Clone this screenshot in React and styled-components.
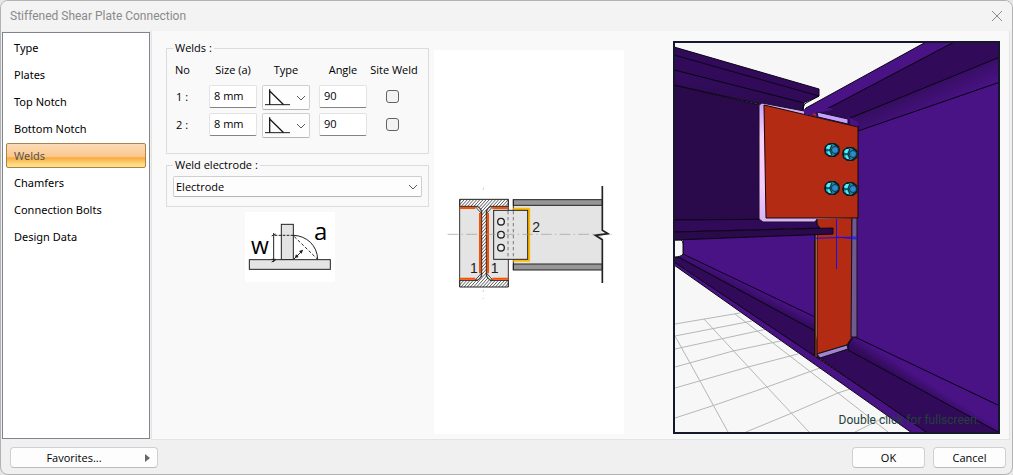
import React, { useState } from "react";
import styled, { createGlobalStyle } from "styled-components";

const pages = [
  "Type",
  "Plates",
  "Top Notch",
  "Bottom Notch",
  "Welds",
  "Chamfers",
  "Connection Bolts",
  "Design Data",
];

const welds = [
  { no: 1, size: "8 mm", angle: "90" },
  { no: 2, size: "8 mm", angle: "90" },
];

const Chevron = () => (
  <ChevronIcon viewBox="0 0 10 6" aria-hidden="true">
    <path d="M1 1l4 4 4-4" fill="none" stroke="#5c5c5c" />
  </ChevronIcon>
);

const FilletIcon = () => (
  <TypeIcon viewBox="0 0 75 51" aria-hidden="true">
    <g stroke="#1c1c1c" strokeWidth="4" fill="none">
      <path d="M14 1V48M14 6L56 47" />
      <path d="M0 47H75" strokeWidth="3" />
    </g>
  </TypeIcon>
);

const WeldSketch = () => (
  <Sketch viewBox="15 21 270 210" role="img" aria-label="Weld size">
    <g fill="#e4e4e4" stroke="#222" strokeWidth="3">
      <rect x="124" y="58" width="36" height="106" />
      <rect x="28" y="164" width="243" height="29" />
    </g>
    <g fill="none" stroke="#222" strokeWidth="3">
      <path d="M101 84V171M95 93l12-6M95 171l12-6M95 163h12" />
      <path d="M104 91H160" strokeDasharray="8 4" />
      <path d="M160 91C200 92 232 122 233 163" />
      <path d="M163 95L232 162" strokeDasharray="9 6" />
      <path d="M162 162L188 136" />
    </g>
    <path d="M189 134l-4 12-8-8zM164 160l4-12 8 8z" fill="#222" />
    <SketchText x="33" y="146" $size={69}>
      w
    </SketchText>
    <SketchText x="222" y="104" $size={72}>
      a
    </SketchText>
  </Sketch>
);

const ConnectionDiagram = () => (
  <Diagram viewBox="-21 0 516 375" role="img" aria-label="Weld positions">
    <defs>
      <pattern
        id="hatch"
        width="7"
        height="7"
        patternUnits="userSpaceOnUse"
        patternTransform="rotate(42)"
      >
        <rect width="7" height="7" fill="#fff" />
        <path d="M1 0V7" stroke="#333" strokeWidth="2" />
      </pattern>
    </defs>
    <rect x="29" y="78" width="146" height="222" fill="#e4e4e4" />
    <rect x="190" y="76" width="267" height="178" fill="#e4e4e4" />
    <g fill="#969696" stroke="#222" strokeWidth="3">
      <rect x="190" y="59" width="267" height="17" />
      <rect x="190" y="252" width="267" height="18" />
    </g>
    <path d="M190 58V270" stroke="#222" strokeWidth="3" />
    <path
      d="M29 58H175V79H120L109 91V289L120 301H175V321H29V301H84L95 289V91L84 79H29Z"
      fill="url(#hatch)"
      stroke="#222"
      strokeWidth="3"
    />
    <path d="M29 58V321M175 58V321" stroke="#333" strokeWidth="3" />
    <g fill="#f4f4f4" stroke="#222" strokeWidth="2.5">
      <path d="M76 80Q92 78 95 101ZM128 80Q112 78 109 101Z" />
      <path d="M76 300Q92 302 95 279ZM128 300Q112 302 109 279Z" />
    </g>
    <g stroke="#ff4d00" strokeWidth="6">
      <path d="M29 84H76M127 84H175M29 296H76M127 296H175" />
      <path d="M90 99V280M114 99V280" />
    </g>
    <path d="M190 87H237V242H190" fill="none" stroke="#ffba00" strokeWidth="7" />
    <rect
      x="131"
      y="91"
      width="102"
      height="147"
      fill="#e4e4e4"
      stroke="#222"
      strokeWidth="3"
    />
    <path
      d="M174 93V237M190 93V237"
      stroke="#777"
      strokeWidth="3"
      strokeDasharray="10 8"
    />
    <g fill="#eee" stroke="#222" strokeWidth="4">
      <circle cx="153" cy="125" r="10" />
      <circle cx="153" cy="164" r="10" />
      <circle cx="153" cy="203" r="10" />
    </g>
    <path
      d="M-7 163H485"
      stroke="#999"
      strokeWidth="2"
      strokeDasharray="32 10 4 10"
    />
    <path d="M100 23V30M100 329V336M100 354V357" stroke="#bbb" strokeWidth="2" />
    <path
      d="M457 18V151L474 161L436 166L457 179V309"
      fill="none"
      stroke="#222"
      strokeWidth="5"
    />
    <DiagramText x="60" y="279">
      1
    </DiagramText>
    <DiagramText x="122" y="279">
      1
    </DiagramText>
    <DiagramText x="247" y="156">
      2
    </DiagramText>
  </Diagram>
);

const Bolt = ({ x, y }) => (
  <g transform={`translate(${x} ${y})`}>
    <path d="M-3-7L3-7 7-4 8 0 7 4 3 7-3 7-7 4-8 0-7-4Z" fill="#081c26" />
    <path d="M-3-5L1-6 5-3 5 3 1 6-3 5-6 3-6-3Z" fill="#268ca0" />
    <path d="M-6-2L-4-5-1-5-3 0ZM-5 2L-3 1-1 5-3 5Z" fill="#4ff0fa" />
    <path d="M0-5L-2 0 0 5M-2 0H-6" fill="none" stroke="#062b38" />
    <circle cx="3" cy="0" r="3.5" fill="#2b8ec9" stroke="#0b3450" />
  </g>
);

const Scene = () => (
  <SceneSvg
    viewBox="675 43 323 389"
    preserveAspectRatio="xMidYMid slice"
    role="img"
    aria-label="3D view"
  >
    <defs>
      <linearGradient
        id="topFillet"
        gradientUnits="userSpaceOnUse"
        x1="920"
        y1="90"
        x2="930"
        y2="112"
      >
        <stop offset="0" stopColor="#360e62" />
        <stop offset="1" stopColor="#491285" />
      </linearGradient>
      <linearGradient
        id="bottomFillet"
        gradientUnits="userSpaceOnUse"
        x1="930"
        y1="374"
        x2="919"
        y2="391"
      >
        <stop offset="0" stopColor="#491285" />
        <stop offset="0.4" stopColor="#491285" />
        <stop offset="1" stopColor="#310b59" />
      </linearGradient>
      <linearGradient
        id="lowerFillet"
        gradientUnits="userSpaceOnUse"
        x1="753"
        y1="287"
        x2="748"
        y2="297"
      >
        <stop offset="0" stopColor="#491285" />
        <stop offset="1" stopColor="#310b59" />
      </linearGradient>
      <linearGradient id="beamFillet" x1="0" y1="0" x2="0" y2="1">
        <stop offset="0" stopColor="#350d61" />
        <stop offset="1" stopColor="#2a0a4b" />
      </linearGradient>
      <linearGradient id="edge" x1="0" y1="0" x2="0" y2="1">
        <stop offset="0" stopColor="#c9a3f5" />
        <stop offset="0.3" stopColor="#f8d2fb" />
        <stop offset="0.7" stopColor="#f4ccfb" />
        <stop offset="1" stopColor="#d6b2f5" />
      </linearGradient>
    </defs>
    <rect x="600" y="0" width="480" height="480" fill="#f7f7f7" />

    {/* floor grid */}
    <g fill="none" stroke="#b3b8b5">
      <path d="M675 324L740 313M675 336L752 321M675 349L767 329M675 367L733 351 785 340M675 388L748 367 798 354M675 418L715 405 767 387 820 368M746 432L792 413 838 393 850 389M855 432L887 416" />
      <path d="M675 336L700 381 728 432M704 319L767 387 809 432M735 314L760 333 838 393 888 432" />
    </g>

    {/* supporting beam, far side */}
    <path d="M840 338H857V352H840ZM806 113L830 106 858 122V131L806 120Z" fill="#491285" />
    <g stroke="#0c0418" strokeLinejoin="round">
      <path d="M683 239L815 234 815 318 683 256Z" fill="#491285" />
      <path d="M674 256L681 256 683 254 815 317 815 331 680 258Z" fill="url(#lowerFillet)" />
      <path d="M674 257L680 258 815 331 819 359 674 263Z" fill="#310b59" />
      <path d="M674 262L819 359 929 433 912 433 674 265Z" fill="#491285" />
      <path d="M819 358L848 349 999 432 999 434 929 434Z" fill="#310b59" />
      <path d="M853 337L857 337 1000 406 1000 433 848 350 848 345Z" fill="url(#bottomFillet)" />
      <path d="M857 131L1000 82 1000 406 855 337Z" fill="#491285" />
      <path d="M813 115L840 102 954 42 1000 42 1000 58 848 119 852 125Z" fill="#310b59" />
      <path d="M848 119L1000 57 1000 82 858 131 858 126 848 123Z" fill="url(#topFillet)" />
      <path d="M803 112L806 108 926 42 954 42 840 102 813 116Z" fill="#491285" />
    </g>
    <path d="M674 240H681Q683 241 683 244V254Q681 257 674 257Z" fill="#f7f7f7" stroke="#111" />

    {/* stiffener under the plate */}
    <path d="M817 217H852V337L847 345 817 354Z" fill="#b32b13" stroke="#111" />
    <path d="M852 217H857V337H851Z" fill="#705b91" stroke="#151020" />
    <path d="M817 354L847 345 848 349 820 358Z" fill="#a184d2" stroke="#111" />
    <path d="M815 235V356" stroke="#111" strokeWidth="2" />
    <path d="M816 235V357" stroke="#b53b1b" />

    {/* supported beam */}
    <g stroke="#0c0418" strokeLinejoin="round">
      <path d="M674 85L760 105 803 112V219L674 220Z" fill="#2a0a4b" />
      <path d="M674 47L819 89V96L803 103 674 70Z" fill="#310b59" />
      <path d="M674 55L819 96" fill="none" />
      <path d="M674 70L804 103 803 112 760 104 674 85Z" fill="url(#beamFillet)" />
      <path d="M819 96L806 103Q802 106 803 112" fill="none" />
      <path d="M674 220L816 219Q816 225 820 228L674 232Z" fill="#310b59" />
      <path d="M674 232L833 228V234L674 240Z" fill="#2a0a4b" />
    </g>

    {/* shear plate */}
    <path d="M759 105L762 103 804 111 858 126V218L817 219 815 222H763L759 219Z" fill="url(#edge)" />
    <path d="M817 219L815 222H763L759 219V105L762 103 804 111" fill="none" stroke="#1c1026" />
    <path d="M804 110L830 108 858 122V127L804 114Z" fill="#491285" />
    <path d="M813 114L840 108 850 120V125Z" fill="#310b59" />
    <path d="M764 105L858 127V218H766Z" fill="#b32b13" stroke="#170607" />
    <path d="M817 112L848 119V124L818 117Z" fill="#c4a1fb" stroke="#180b2a" />
    <path d="M813 114L816 115" stroke="#b32b13" strokeWidth="2" />
    <Bolt x={832} y={150} />
    <Bolt x={850} y={154} />
    <Bolt x={832} y={188} />
    <Bolt x={850} y={189} />
    <path d="M836.5 219V269M810 238.500L857 237M836 237L857 239" fill="none" stroke="#1710ee" />
  </SceneSvg>
);

const App = () => {
  const [page, setPage] = useState("Welds");

  return (
    <>
      <GlobalStyle />
      <Dialog>
        <TitleBar>
          <Title>Stiffened Shear Plate Connection</Title>
          <CloseButton type="button" aria-label="Close">
            <svg width="12" height="12" viewBox="0 0 12 12">
              <path d="M1 1l10 10M11 1L1 11" stroke="#8c8c8c" />
            </svg>
          </CloseButton>
        </TitleBar>
        <Body>
          <Sidebar>
            {pages.map((name) => (
              <PageButton
                key={name}
                type="button"
                $active={name === page}
                onClick={() => setPage(name)}
              >
                {name}
              </PageButton>
            ))}
          </Sidebar>
          <Content>
            <Form>
              <Group $top={6}>
                <Legend>Welds :</Legend>
                <WeldTable>
                  <thead>
                    <tr>
                      <HeadCell $width={34} $align="left">
                        No
                      </HeadCell>
                      <HeadCell $width={53} $gap={5}>
                        Size (a)
                      </HeadCell>
                      <HeadCell $width={57} $gap={9}>
                        Type
                      </HeadCell>
                      <HeadCell $width={48}>Angle</HeadCell>
                      <HeadCell $width={54}>Site Weld</HeadCell>
                    </tr>
                  </thead>
                  <tbody>
                    {welds.map(({ no, size, angle }) => (
                      <tr key={no}>
                        <RowHead scope="row">{no} :</RowHead>
                        <Cell $gap={5}>
                          <Field defaultValue={size} aria-label={`Size ${no}`} />
                        </Cell>
                        <Cell $gap={9}>
                          <TypePicker>
                            <TypeSelect aria-label={`Type ${no}`}>
                              <option value="fillet" aria-label="Fillet" />
                            </TypeSelect>
                            <FilletIcon />
                            <Chevron />
                          </TypePicker>
                        </Cell>
                        <Cell>
                          <Field defaultValue={angle} aria-label={`Angle ${no}`} />
                        </Cell>
                        <Cell $align="center">
                          <Checkbox type="checkbox" aria-label={`Site weld ${no}`} />
                        </Cell>
                      </tr>
                    ))}
                  </tbody>
                </WeldTable>
              </Group>
              <Group $top={3}>
                <Legend>Weld electrode :</Legend>
                <Picker>
                  <Select aria-label="Weld electrode">
                    <option>Electrode</option>
                  </Select>
                  <Chevron />
                </Picker>
              </Group>
              <WeldSketch />
            </Form>
            <DiagramPanel>
              <ConnectionDiagram />
            </DiagramPanel>
            <Viewer>
              <Scene />
              <Hint>Double click for fullscreen.</Hint>
            </Viewer>
          </Content>
        </Body>
        <Footer>
          <FavoritesButton type="button">
            <span>Favorites...</span>
            <svg width="5" height="8" viewBox="0 0 5 8" aria-hidden="true">
              <path d="M0 0l5 4-5 4z" fill="#666" />
            </svg>
          </FavoritesButton>
          <Actions>
            <Button type="button">OK</Button>
            <Button type="button">Cancel</Button>
          </Actions>
        </Footer>
      </Dialog>
    </>
  );
};

const GlobalStyle = createGlobalStyle`
  * {
    box-sizing: border-box;
  }

  body {
    margin: 0;
    background: #e6e6e6;
    color: #000;
    font-family: "Open Sans", "Noto Sans", sans-serif;
    font-size: 11px;
    line-height: 16px;
  }

  button,
  input,
  select {
    font: inherit;
    color: inherit;
  }
`;

const Dialog = styled.div`
  display: flex;
  flex-direction: column;
  min-height: 100vh;
  border: 1px solid #b2b2b2;
  border-radius: 8px;
  background: #f0f0f0;
  overflow: hidden;
`;

const TitleBar = styled.header`
  display: flex;
  align-items: center;
  justify-content: space-between;
  height: 30px;
  padding: 0 9px;
  background: #f3f3f3;
`;

const Title = styled.h1`
  margin: 0;
  color: #8a8a8a;
  font-family: Roboto, sans-serif;
  font-size: 12px;
  font-weight: 400;
`;

const CloseButton = styled.button`
  display: flex;
  padding: 0;
  border: none;
  background: none;
`;

const Body = styled.div`
  display: flex;
  flex: 1;
  gap: 1px;
  padding: 0 2px 0 1px;
`;

const Sidebar = styled.nav`
  display: flex;
  flex-direction: column;
  flex: none;
  gap: 2px;
  width: 148px;
  margin: 1px 0;
  padding: 2px 3px;
  border: 1px solid #7f848f;
  background: #fff;
  font-family: "Noto Sans", sans-serif;
`;

const PageButton = styled.button`
  height: 25px;
  padding: 0 7px;
  border: 1px solid ${({ $active }) => ($active ? "#a98349" : "transparent")};
  border-radius: 2px;
  background: ${({ $active }) =>
    $active
      ? "linear-gradient(#fbdcb9, #fbc78a 55%, #f7a940 60%, #fdd679 85%, #fee293)"
      : "none"};
  color: ${({ $active }) => ($active ? "#555" : "#000")};
  text-align: left;
`;

const Content = styled.main`
  display: grid;
  grid-template-columns: 263px 190px 1fr;
  flex: 1;
  gap: 5px;
  padding: 9px 9px 5px 14px;
  border: 1px solid #e4e4e4;
  border-top: none;
  background: #f9f9f9;
`;

const Form = styled.div`
  display: flex;
  flex-direction: column;
  gap: 3px;
`;

const Group = styled.fieldset`
  min-width: 0;
  margin: 0;
  padding: ${({ $top }) => $top}px 6px 9px;
  border: 1px solid #dcdcdc;
`;

const Legend = styled.legend`
  padding: 0 2px;
`;

const WeldTable = styled.table`
  margin: 0 0 3px 2px;
  border-spacing: 0;
  table-layout: fixed;
  width: 246px;
`;

const HeadCell = styled.th`
  width: ${({ $width }) => $width}px;
  height: 23px;
  padding: 0 ${({ $gap = 0 }) => $gap}px 7px 0;
  font-weight: 400;
  text-align: ${({ $align = "center" }) => $align};
  white-space: nowrap;
`;

const RowHead = styled.th`
  height: 28px;
  padding: 4px 0 0 1px;
  font-weight: 400;
  text-align: left;
  vertical-align: top;
`;

const Cell = styled.td`
  height: 28px;
  padding: 0 ${({ $gap = 0 }) => $gap}px 0 0;
  text-align: ${({ $align = "left" }) => $align};
  vertical-align: top;
`;

const Field = styled.input`
  display: block;
  width: 100%;
  height: 23px;
  padding: 0 4px 2px;
  border: 1px solid #e3e3e3;
  border-bottom-color: #848484;
  border-radius: 2px;
  background: #fff;
`;

const Picker = styled.div`
  display: grid;
  align-items: center;
`;

const TypePicker = styled(Picker)`
  height: 25px;
`;

const Select = styled.select`
  grid-area: 1 / 1;
  width: 100%;
  height: 21px;
  padding: 0 2px;
  border: 1px solid #cfcfcf;
  border-bottom-color: #b5b5b5;
  border-radius: 2px;
  background: #fdfdfd;
  appearance: none;
`;

const TypeSelect = styled(Select)`
  height: 25px;
`;

const ChevronIcon = styled.svg`
  grid-area: 1 / 1;
  justify-self: end;
  width: 10px;
  height: 6px;
  margin-right: 4px;
  pointer-events: none;
`;

const TypeIcon = styled.svg`
  grid-area: 1 / 1;
  width: 25px;
  height: 17px;
  margin-left: 3px;
  pointer-events: none;
`;

const Checkbox = styled.input`
  width: 13px;
  height: 13px;
  margin: 5px 3px 0 0;
  border: 1px solid #626262;
  border-radius: 3px;
  background: #f3f3f3;
  appearance: none;

  &:checked {
    background: #0067c0;
  }
`;

const Sketch = styled.svg`
  width: 90px;
  height: 70px;
  margin: 2px 0 0 79px;
  background: #fff;
`;

const SketchText = styled.text`
  font-family: "Open Sans", sans-serif;
  font-size: ${({ $size }) => $size}px;
`;

const DiagramPanel = styled.div`
  display: flex;
  align-items: center;
  justify-content: center;
  margin-top: 10px;
  background: #fff;
`;

const Diagram = styled.svg`
  width: 172px;
  height: 125px;
`;

const DiagramText = styled.text`
  fill: #222;
  font-family: "Liberation Sans", sans-serif;
  font-size: 42px;
`;

const Viewer = styled.div`
  position: relative;
  min-height: 393px;
  margin: 1px 0 0 44px;
  border: 2px solid #15172b;
  overflow: hidden;
`;

const SceneSvg = styled.svg`
  position: absolute;
  width: 100%;
  height: 100%;
`;

const Hint = styled.span`
  position: absolute;
  right: 18px;
  bottom: 4px;
  color: #24403c;
  font-family: Roboto, sans-serif;
  font-size: 12px;
`;

const Footer = styled.footer`
  display: flex;
  justify-content: space-between;
  padding: 7px 6px 6px 9px;
`;

const Actions = styled.div`
  display: flex;
  gap: 8px;
`;

const Button = styled.button`
  width: 73px;
  height: 21px;
  padding: 0;
  border: 1px solid #d0d0d0;
  border-bottom-color: #bcbcbc;
  border-radius: 4px;
  background: #fdfdfd;
`;

const FavoritesButton = styled(Button)`
  display: flex;
  align-items: center;
  width: 148px;
  padding: 0 7px;

  span {
    flex: 1;
    margin-right: 15px;
  }
`;

export default App;
